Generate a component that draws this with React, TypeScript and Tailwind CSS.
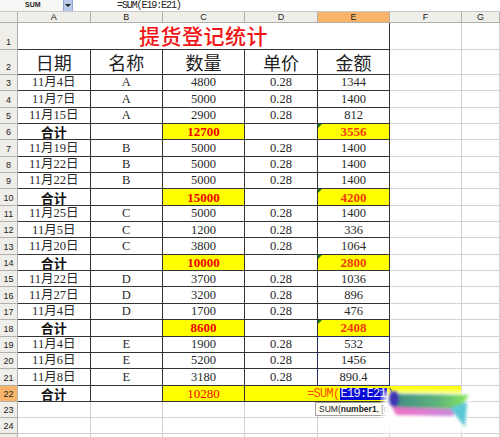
type Row = {
  n: number;
  a: string;
  b: string;
  c: string;
  d: string;
  e: string;
  sum?: boolean;
};

const rows: Row[] = [
  { n: 3, a: "11月4日", b: "A", c: "4800", d: "0.28", e: "1344" },
  { n: 4, a: "11月7日", b: "A", c: "5000", d: "0.28", e: "1400" },
  { n: 5, a: "11月15日", b: "A", c: "2900", d: "0.28", e: "812" },
  { n: 6, a: "合计", b: "", c: "12700", d: "", e: "3556", sum: true },
  { n: 7, a: "11月19日", b: "B", c: "5000", d: "0.28", e: "1400" },
  { n: 8, a: "11月22日", b: "B", c: "5000", d: "0.28", e: "1400" },
  { n: 9, a: "11月22日", b: "B", c: "5000", d: "0.28", e: "1400" },
  { n: 10, a: "合计", b: "", c: "15000", d: "", e: "4200", sum: true },
  { n: 11, a: "11月25日", b: "C", c: "5000", d: "0.28", e: "1400" },
  { n: 12, a: "11月5日", b: "C", c: "1200", d: "0.28", e: "336" },
  { n: 13, a: "11月20日", b: "C", c: "3800", d: "0.28", e: "1064" },
  { n: 14, a: "合计", b: "", c: "10000", d: "", e: "2800", sum: true },
  { n: 15, a: "11月22日", b: "D", c: "3700", d: "0.28", e: "1036" },
  { n: 16, a: "11月27日", b: "D", c: "3200", d: "0.28", e: "896" },
  { n: 17, a: "11月4日", b: "D", c: "1700", d: "0.28", e: "476" },
  { n: 18, a: "合计", b: "", c: "8600", d: "", e: "2408", sum: true },
  { n: 19, a: "11月4日", b: "E", c: "1900", d: "0.28", e: "532" },
  { n: 20, a: "11月6日", b: "E", c: "5200", d: "0.28", e: "1456" },
  { n: 21, a: "11月8日", b: "E", c: "3180", d: "0.28", e: "890.4" },
];

const rowHead =
  "flex items-end justify-center pb-[2px] border-r border-b border-[#b0b0a8] bg-[#efeee8] text-[9px] leading-none text-[#222] font-['Liberation_Sans',sans-serif]";
const dark =
  "flex items-center justify-center border-r border-b border-[#333] text-[12.5px] leading-none text-[#2a2a2a]";
const light = "border-r border-b border-[#d2d2d2]";
const colHead =
  "flex items-center justify-center border-r border-b border-[#b0b0a8] bg-[#efeee8] text-[9px] leading-none text-[#222] font-['Liberation_Sans',sans-serif]";

function ErrMark() {
  return (
    <span className="absolute left-0 top-0 w-0 h-0 border-t-[4px] border-r-[4px] border-t-[#1a7a1a] border-r-transparent" />
  );
}

export default function App() {
  return (
    <div className="relative w-[500px] h-[437px] overflow-hidden bg-white font-['Liberation_Serif','Noto_Sans_CJK_SC',serif]">
      {/* formula bar */}
      <div className="flex h-[12px] border-b border-[#c8c8c8]">
        <div className="w-[63px] bg-[#f6f6f4] pl-[25px] flex items-center text-[7px] font-bold text-[#222] font-['Liberation_Sans',sans-serif]">
          SUM
        </div>
        <div className="w-[10px] flex items-center justify-center bg-[#b9c9ea] border-x border-[#93a6cf]">
          <span className="w-0 h-0 border-l-[3px] border-r-[3px] border-t-[3px] border-l-transparent border-r-transparent border-t-[#222]" />
        </div>
        <div className="flex-1 pl-[44px] flex items-center text-[10px] leading-none tracking-[-1.1px] text-[#222] font-['Liberation_Mono',monospace]">
          =SUM(E19:E21)
        </div>
      </div>

      {/* sheet */}
      <div className="grid grid-cols-[18px_72.5px_72.5px_82px_73px_72px_72px_1fr] grid-rows-[11px_27px_25px_repeat(20,16.35px)_16px_16px_16px]">
        {/* column headers */}
        <div className={colHead}></div>
        <div className={colHead}>A</div>
        <div className={colHead}>B</div>
        <div className={colHead}>C</div>
        <div className={colHead}>D</div>
        <div className="flex items-center justify-center border-r border-b border-[#b0b0a8] bg-[#f9b46a] text-[9px] leading-none text-[#222] font-['Liberation_Sans',sans-serif]">
          E
        </div>
        <div className={colHead}>F</div>
        <div className={colHead}>G</div>

        {/* row 1 title */}
        <div className={rowHead}>1</div>
        <div className="col-span-5 flex items-center justify-center border-r border-b border-[#333] text-[21px] font-medium tracking-[0.5px] text-[#f01414] font-['Noto_Sans_CJK_SC',sans-serif]">
          提货登记统计
        </div>
        <div className={light}></div>
        <div className={light}></div>

        {/* row 2 headers */}
        <div className={rowHead}>2</div>
        {["日期", "名称", "数量", "单价", "金额"].map((h) => (
          <div
            key={h}
            className="flex items-center justify-center border-r border-b border-[#333] text-[18px] font-normal text-[#222] font-['Noto_Sans_CJK_SC',sans-serif]"
          >
            {h}
          </div>
        ))}
        <div className={light}></div>
        <div className={light}></div>

        {/* data rows */}
        {rows.map((r) => (
          <div key={r.n} className="contents">
            <div className={rowHead}>{r.n}</div>
            <div className={dark}>
              {r.sum ? (
                <span className="text-[13px] font-bold text-[#111] font-['Noto_Sans_CJK_SC',sans-serif]">
                  {r.a}
                </span>
              ) : (
                r.a
              )}
            </div>
            <div className={dark}>{r.b}</div>
            {r.sum ? (
              <div className="flex items-center justify-center border-r border-b border-[#333] bg-[#ffff00] text-[13px] leading-none font-bold text-[#f00000]">
                {r.c}
              </div>
            ) : (
              <div className={dark}>{r.c}</div>
            )}
            <div className={dark}>{r.d}</div>
            {r.sum ? (
              <div className="relative flex items-center justify-center border-r border-b border-[#333] bg-[#ffff00] text-[13px] leading-none font-bold text-[#f03c0a]">
                <ErrMark />
                {r.e}
              </div>
            ) : (
              <div className={dark}>{r.e}</div>
            )}
            <div className={light}></div>
            <div className={light}></div>
          </div>
        ))}

        {/* row 22 */}
        <div className="flex items-end justify-center pb-[2px] border-r border-b border-[#b0b0a8] bg-[#f9b46a] text-[9px] leading-none text-[#222] font-['Liberation_Sans',sans-serif]">
          22
        </div>
        <div className={dark}>
          <span className="text-[13px] font-bold text-[#111] font-['Noto_Sans_CJK_SC',sans-serif]">
            合计
          </span>
        </div>
        <div className={dark}></div>
        <div className="flex items-center justify-center border-r border-b border-[#333] bg-[#ffff00] text-[13px] leading-none text-[#f00000]">
          10280
        </div>
        <div className="border-b border-[#333] bg-[#ffff00]"></div>
        <div className="border-b border-[#333] bg-[#ffff00]"></div>
        <div className="border-r border-b border-[#d2d2d2] bg-[#ffff00]"></div>
        <div className={light}></div>

        {/* rows 23-24, plus the sliver of 25 */}
        {[23, 24, 25].map((n) => (
          <div key={n} className="contents">
            <div className={rowHead}>{n < 25 ? n : ""}</div>
            <div className={light}></div>
            <div className={light}></div>
            <div className={light}></div>
            <div className={light}></div>
            <div className={light}></div>
            <div className={light}></div>
            <div className={light}></div>
          </div>
        ))}
      </div>

      {/* copy range marching ants E19:E21 */}
      <div className="absolute left-[317px] top-[336px] w-[73px] h-[50px] border border-dashed border-[#1c2a7a]" />

      {/* in-cell formula editor */}
      <div className="absolute left-[307px] top-[386px] h-[15px] flex items-center text-[12px] leading-none tracking-[-0.7px] font-['Liberation_Mono',monospace]">
        <span className="text-[#ff4a00]">=SUM(</span>
        <span className="bg-[#0a0ad8] text-[#e8e8f8] px-[1px]">E19:E21</span>
        <span className="text-[#222]">)</span>
      </div>

      {/* function tooltip */}
      <div className="absolute left-[315px] top-[402px] h-[14px] w-[140px] flex items-center pl-[3px] bg-[#fdfdf6] border border-[#a0a0a0] text-[8.5px] leading-none text-[#222] font-['Liberation_Sans',sans-serif] whitespace-nowrap overflow-hidden">
        SUM(<b>number1</b>, [number2], ...)
      </div>

      {/* blurred colour blob */}
      <svg
        className="absolute left-[380px] top-[384px]"
        width="100"
        height="52"
        viewBox="0 0 100 52"
      >
        <defs>
          <filter id="blur" x="-20%" y="-20%" width="140%" height="140%">
            <feGaussianBlur stdDeviation="1.6" />
          </filter>
          <filter id="soft" x="-20%" y="-20%" width="140%" height="140%">
            <feGaussianBlur stdDeviation="3" />
          </filter>
          <linearGradient id="g1" x1="0" x2="1">
            <stop offset="0" stopColor="#3f8a86" />
            <stop offset="0.6" stopColor="#5fb47a" />
            <stop offset="1" stopColor="#86e85e" />
          </linearGradient>
          <linearGradient id="g2" x1="0" x2="1">
            <stop offset="0" stopColor="#f070c4" />
            <stop offset="1" stopColor="#c888dc" />
          </linearGradient>
        </defs>
        <polygon points="3,8 90,8 84,48 2,48" fill="#ffffff" filter="url(#soft)" />
        <g filter="url(#blur)">
          <polygon points="12,10 89,11 79,25 14,24" fill="url(#g1)" />
          <polygon points="12,23 76,25 73,32 16,31" fill="url(#g2)" />
          <polygon points="70,24 87,18 85,43" fill="#5cc6d6" />
          <ellipse cx="14" cy="15" rx="5" ry="8" fill="#3e34b0" />
        </g>
      </svg>
    </div>
  );
}
